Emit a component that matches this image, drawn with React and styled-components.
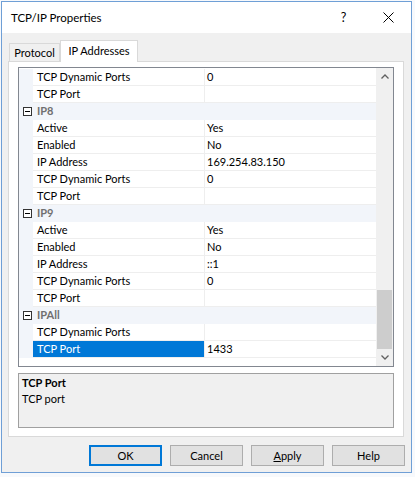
import React from "react";
import styled, { createGlobalStyle } from "styled-components";

const GlobalStyle = createGlobalStyle`
  html, body {
    margin: 0;
    padding: 0;
  }
  body {
    width: 415px;
    height: 477px;
    overflow: hidden;
    background: #f7f9fc;
    font-family: "Segoe UI", Lato, "Noto Sans", sans-serif;
    font-size: 11px;
    color: #000;
  }
`;

// window chrome

const Window = styled.div`
  margin: 1px 0 0 1px;
  width: 411px;
  height: 472px;
  box-sizing: border-box;
  border: 1px solid #6f9fd6;
  background: #f0f0f0;
  display: flex;
  flex-direction: column;
`;

const TitleBar = styled.div`
  height: 31px;
  flex-shrink: 0;
  background: #fff;
  display: flex;
  align-items: center;
`;

const Title = styled.div`
  flex: 1;
  padding-left: 9px;
  font-size: 11.5px;
`;

const CaptionButton = styled.div`
  width: 45px;
  height: 31px;
  display: flex;
  align-items: center;
  justify-content: center;
  font-size: 12.5px;
`;

const Body = styled.div`
  flex: 1;
  display: flex;
  flex-direction: column;
  padding: 7px 7px 0 6px;
`;

// tabs

const TabStrip = styled.div`
  height: 21px;
  display: flex;
  align-items: flex-end;
  padding-left: 1px;
`;

const Tab = styled.div`
  box-sizing: border-box;
  width: ${(p) => p.$width}px;
  height: ${(p) => (p.$active ? 22 : 18)}px;
  margin-bottom: ${(p) => (p.$active ? -1 : 0)}px;
  position: relative;
  z-index: ${(p) => (p.$active ? 1 : 0)};
  border: 1px solid #d9d9d9;
  border-bottom: none;
  background: ${(p) => (p.$active ? "#fff" : "#f0f0f0")};
  display: flex;
  align-items: center;
  justify-content: center;
  padding-bottom: ${(p) => (p.$active ? 3 : 0)}px;
`;

const TabPanel = styled.div`
  box-sizing: border-box;
  height: 376px;
  border: 1px solid #d9d9d9;
  background: #fff;
  padding: 5px 9px 8px 9px;
  display: flex;
  flex-direction: column;
  gap: 6px;
`;

// property grid

const Grid = styled.div`
  box-sizing: border-box;
  height: 300px;
  border: 1px solid #828790;
  display: flex;
`;

const Rows = styled.div`
  flex: 1;
  padding-top: 1px;
  background: #fff;
  overflow: hidden;
`;

const Row = styled.div`
  display: flex;
  height: 17px;
  line-height: 16px;
  background: ${(p) => (p.$category ? "#f2f5fa" : "#fff")};
`;

const Gutter = styled.div`
  width: 14px;
  flex-shrink: 0;
  background: #f2f5fa;
  display: flex;
  align-items: center;
  justify-content: center;
  padding-left: 2px;
  box-sizing: border-box;
`;

const CategoryName = styled.div`
  padding-left: 4px;
  font-weight: bold;
  color: #707070;
`;

const NameCell = styled.div`
  box-sizing: border-box;
  width: 171px;
  flex-shrink: 0;
  padding-left: 4px;
  border-bottom: 1px solid #eeeeee;
  white-space: nowrap;
  background: ${(p) => (p.$selected ? "#0078d7" : "transparent")};
  color: ${(p) => (p.$selected ? "#fff" : "#000")};
`;

const ValueCell = styled.div`
  box-sizing: border-box;
  flex: 1;
  padding-left: 2px;
  border-left: 1px solid #eeeeee;
  border-bottom: 1px solid #eeeeee;
  white-space: nowrap;
`;

const ScrollBar = styled.div`
  width: 17px;
  flex-shrink: 0;
  background: #f0f0f0;
  display: flex;
  flex-direction: column;
`;

const ArrowButton = styled.div`
  height: 17px;
  flex-shrink: 0;
  display: flex;
  align-items: center;
  justify-content: center;
`;

const Track = styled.div`
  flex: 1;
  display: flex;
  flex-direction: column;
  justify-content: flex-end;
  padding: 0 1px;
`;

const Thumb = styled.div`
  height: 59px;
  background: #cdcdcd;
`;

// description

const Description = styled.div`
  box-sizing: border-box;
  height: 55px;
  border: 1px solid #a0a0a0;
  background: #f0f0f0;
  padding: 1px 3px;
  line-height: 16px;
`;

const DescTitle = styled.div`
  font-weight: bold;
`;

// buttons

const ButtonRow = styled.div`
  display: flex;
  justify-content: flex-end;
  gap: 8px;
  margin: 8px -1px 0 0;
`;

const Button = styled.div`
  box-sizing: border-box;
  width: 73px;
  height: 21px;
  background: #e1e1e1;
  border: ${(p) => (p.$default ? "2px solid #0078d7" : "1px solid #adadad")};
  display: flex;
  align-items: center;
  justify-content: center;
  padding-bottom: 1px;
`;

const Key = styled.span`
  text-decoration: underline;
`;

const MinusBox = () => (
  <svg width="9" height="9" viewBox="0 0 9 9">
    <rect x="0.5" y="0.5" width="8" height="8" fill="#fff" stroke="#333" />
    <line x1="2" y1="4.5" x2="7" y2="4.5" stroke="#000" />
  </svg>
);

const Chevron = ({ up }) => (
  <svg width="8" height="5" viewBox="0 0 8 5">
    <path
      d={up ? "M0.5 4.5 L4 1 L7.5 4.5" : "M0.5 0.5 L4 4 L7.5 0.5"}
      fill="none"
      stroke="#606060"
      strokeWidth="1.3"
    />
  </svg>
);

const CloseIcon = () => (
  <svg width="11" height="11" viewBox="0 0 11 11">
    <path d="M0.5 0.5 L10.5 10.5 M10.5 0.5 L0.5 10.5" stroke="#000" strokeWidth="1" />
  </svg>
);

const rows = [
  { name: "TCP Dynamic Ports", value: "0" },
  { name: "TCP Port", value: "" },
  { category: "IP8" },
  { name: "Active", value: "Yes" },
  { name: "Enabled", value: "No" },
  { name: "IP Address", value: "169.254.83.150" },
  { name: "TCP Dynamic Ports", value: "0" },
  { name: "TCP Port", value: "" },
  { category: "IP9" },
  { name: "Active", value: "Yes" },
  { name: "Enabled", value: "No" },
  { name: "IP Address", value: "::1" },
  { name: "TCP Dynamic Ports", value: "0" },
  { name: "TCP Port", value: "" },
  { category: "IPAll" },
  { name: "TCP Dynamic Ports", value: "" },
  { name: "TCP Port", value: "1433", selected: true },
];

export default function App() {
  return (
    <>
      <GlobalStyle />
      <Window>
        <TitleBar>
          <Title>TCP/IP Properties</Title>
          <CaptionButton>?</CaptionButton>
          <CaptionButton>
            <CloseIcon />
          </CaptionButton>
        </TitleBar>
        <Body>
          <TabStrip>
            <Tab $width={51}>Protocol</Tab>
            <Tab $width={78} $active>
              IP Addresses
            </Tab>
          </TabStrip>
          <TabPanel>
            <Grid>
              <Rows>
                {rows.map((r, i) =>
                  r.category ? (
                    <Row key={i} $category>
                      <Gutter>
                        <MinusBox />
                      </Gutter>
                      <CategoryName>{r.category}</CategoryName>
                    </Row>
                  ) : (
                    <Row key={i}>
                      <Gutter />
                      <NameCell $selected={r.selected}>{r.name}</NameCell>
                      <ValueCell>{r.value}</ValueCell>
                    </Row>
                  )
                )}
              </Rows>
              <ScrollBar>
                <ArrowButton>
                  <Chevron up />
                </ArrowButton>
                <Track>
                  <Thumb />
                </Track>
                <ArrowButton>
                  <Chevron />
                </ArrowButton>
              </ScrollBar>
            </Grid>
            <Description>
              <DescTitle>TCP Port</DescTitle>
              <div>TCP port</div>
            </Description>
          </TabPanel>
          <ButtonRow>
            <Button $default>OK</Button>
            <Button>Cancel</Button>
            <Button>
              <span>
                <Key>A</Key>pply
              </span>
            </Button>
            <Button>Help</Button>
          </ButtonRow>
        </Body>
      </Window>
    </>
  );
}
